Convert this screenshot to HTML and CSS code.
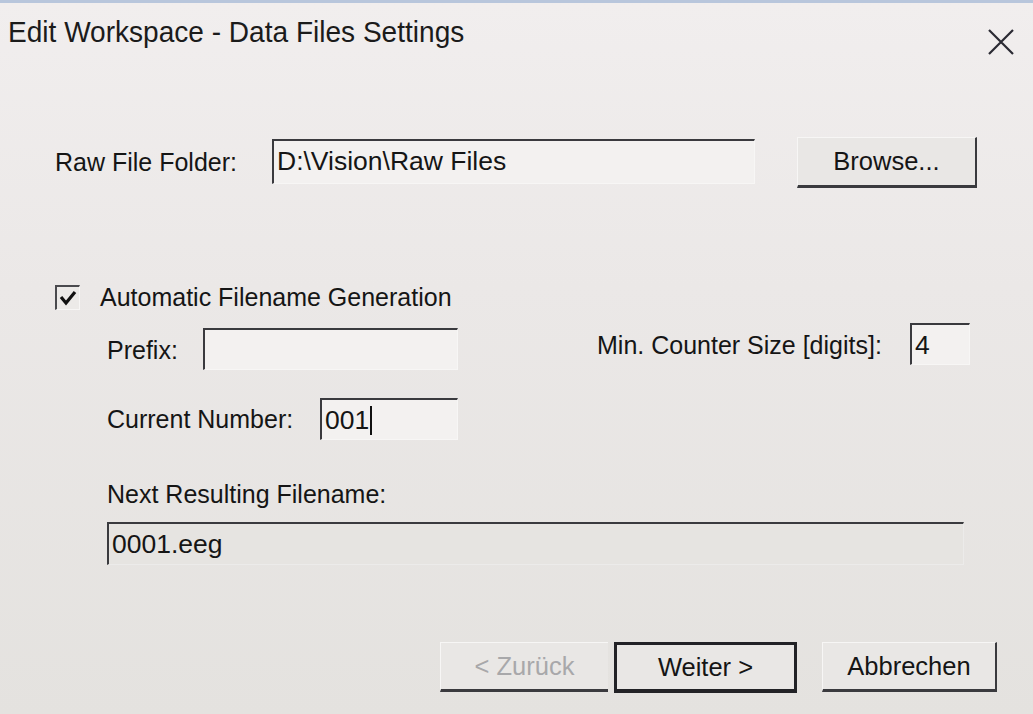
FILE: index.html
```html
<!DOCTYPE html>
<html>
<head>
<meta charset="utf-8">
<title>Edit Workspace - Data Files Settings</title>
<link rel="stylesheet" href="styles.css">
</head>
<body>
<div class="dialog">
  <div class="titlebar">
    <span class="title">Edit Workspace - Data Files Settings</span>
    <svg class="close" width="28" height="28" viewBox="0 0 28 28"><path d="M2 2 L26 26 M26 2 L2 26" stroke="#2a2a33" stroke-width="2.2" fill="none"/></svg>
  </div>
  <div class="content">
    <div class="row1">
      <span class="lbl lbl-raw">Raw File Folder:</span>
      <div class="field field-raw">D:\Vision\Raw Files</div>
      <div class="btn btn-browse">Browse...</div>
    </div>

    <div class="auto">
      <span class="check"><svg width="20" height="18" viewBox="0 0 20 18"><path d="M3 8 L8 14 L17 3" stroke="#111" stroke-width="3.2" fill="none"/></svg></span>
      <span class="lbl">Automatic Filename Generation</span>
    </div>

    <div class="sub">
      <div class="row-prefix">
        <span class="lbl lbl-prefix">Prefix:</span>
        <div class="field field-prefix"></div>
        <span class="lbl lbl-min">Min. Counter Size [digits]:</span>
        <div class="field field-min">4</div>
      </div>
      <div class="row-current">
        <span class="lbl lbl-current">Current Number:</span>
        <div class="field field-current">001<span class="caret"></span></div>
      </div>
      <div class="lbl lbl-next">Next Resulting Filename:</div>
      <div class="field field-next">0001.eeg</div>
    </div>
  </div>
  <div class="footer">
    <div class="btn btn-back">&lt; Zurück</div>
    <div class="btn btn-next">Weiter &gt;</div>
    <div class="btn btn-cancel">Abbrechen</div>
  </div>
</div>
</body>
</html>
```

FILE: styles.css
```css
html, body {
  margin: 0;
  padding: 0;
}
body {
  width: 1033px;
  height: 714px;
  overflow: hidden;
  font-family: "Liberation Sans", Arial, sans-serif;
  color: #151515;
}
.dialog {
  box-sizing: border-box;
  width: 1033px;
  height: 714px;
  border-top: 3px solid #b8c6dc;
  background: linear-gradient(180deg, #f1eeee 0%, #ebe8e7 40%, #e4e2df 100%);
}
.titlebar {
  box-sizing: border-box;
  height: 67px;
  display: flex;
  align-items: flex-start;
  justify-content: space-between;
  padding: 11px 18px 0 8px;
}
.title {
  display: inline-block;
  font-size: 30px;
  line-height: 36px;
  transform: scaleX(0.935);
  transform-origin: left center;
  white-space: nowrap;
  color: #1b1b1b;
}
.close {
  margin-top: 14px;
}
.content {
  padding-left: 55px;
}
.lbl {
  font-size: 25px;
  line-height: 30px;
  white-space: nowrap;
}
.field {
  box-sizing: border-box;
  background: #f3f1f0;
  border-top: 2px solid #3a3a3e;
  border-left: 2px solid #3a3a3e;
  border-right: 1px solid #f7f6f5;
  border-bottom: 1px solid #f7f6f5;
  font-size: 26.5px;
  line-height: 34px;
  padding: 3px 0 0 3px;
  white-space: nowrap;
}
.btn {
  box-sizing: border-box;
  display: flex;
  align-items: center;
  justify-content: center;
  font-size: 25.5px;
  background: #e9e7e5;
  border-top: 1px solid #f7f6f5;
  border-left: 1px solid #f7f6f5;
  border-right: 2px solid #3a3a3e;
  border-bottom: 3px solid #3a3a3e;
}
.row1 {
  display: flex;
  align-items: center;
  height: 51px;
  margin-top: 67px;
}
.lbl-raw {
  width: 217px;
  margin-bottom: 2px;
}
.field-raw {
  width: 483px;
  height: 45px;
  margin-bottom: 3px;
}
.btn-browse {
  width: 180px;
  height: 51px;
  margin-left: 42px;
}
.auto {
  display: flex;
  align-items: center;
  gap: 20px;
  margin-top: 96px;
  height: 26px;
}
.check {
  box-sizing: border-box;
  width: 25px;
  height: 25px;
  border-top: 2px solid #4a4a4e;
  border-left: 2px solid #4a4a4e;
  border-right: 1px solid #f7f6f5;
  border-bottom: 1px solid #f7f6f5;
  background: #eceae8;
  display: flex;
  align-items: center;
  justify-content: center;
}
.sub {
  margin-left: 52px;
}
.row-prefix {
  display: flex;
  align-items: flex-start;
  margin-top: 13px;
}
.lbl-prefix {
  width: 96px;
  margin-top: 12px;
}
.field-prefix {
  width: 255px;
  height: 42px;
  margin-top: 5px;
}
.lbl-min {
  width: 313px;
  margin-left: 139px;
  margin-top: 7px;
}
.field-min {
  width: 60px;
  height: 42px;
}
.row-current {
  display: flex;
  align-items: center;
  margin-top: 28px;
}
.lbl-current {
  width: 213px;
}
.field-current {
  width: 138px;
  height: 42px;
  display: flex;
  align-items: flex-start;
}
.caret {
  display: inline-block;
  width: 2px;
  height: 29px;
  margin-top: 3px;
  margin-left: 1px;
  background: #111;
}
.lbl-next {
  margin-top: 39px;
}
.field-next {
  width: 857px;
  height: 43px;
  margin-top: 13px;
  background: #e6e4e1;
  border-right-color: #ecebea;
  border-bottom-color: #ecebea;
}
.footer {
  display: flex;
  justify-content: flex-end;
  align-items: flex-start;
  padding-right: 36px;
  margin-top: 77px;
}
.btn-back {
  width: 168px;
  height: 50px;
  color: #a8a8aa;
  border-right: none;
}
.btn-next {
  width: 183px;
  height: 51px;
  margin-left: 6px;
  border: 3px solid #222226;
  border-bottom-width: 4px;
}
.btn-cancel {
  width: 175px;
  height: 50px;
  margin-left: 25px;
}
```
